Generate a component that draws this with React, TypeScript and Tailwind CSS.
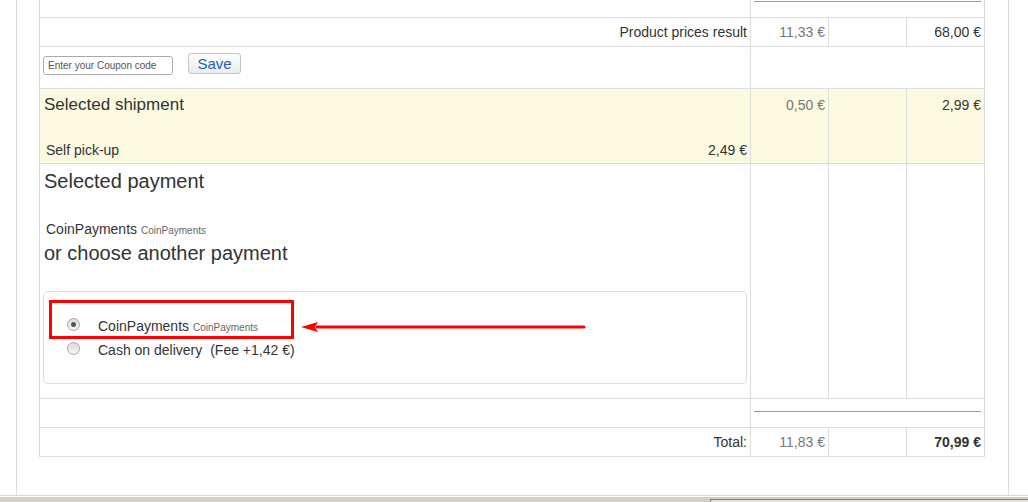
import React from "react";

const priceMuted = "text-right text-[#777] pr-[3px]";
const priceMain = "text-right text-[#333] pr-[3px]";

const Radio: React.FC<{ checked?: boolean }> = ({ checked }) => (
  <span className="relative inline-flex h-[13px] w-[13px] shrink-0 items-center justify-center rounded-full border border-[#a9a9a9] bg-gradient-to-b from-[#dcdcdc] to-[#f6f6f6]">
    {checked && <span className="h-[5px] w-[5px] rounded-full bg-[#555]" />}
  </span>
);

// thin rule used above the subtotal columns
const Rule = () => <div className="mx-[3px] border-t border-[#999]" />;

export default function App() {
  return (
    <div className="flex h-[502px] w-[1028px] flex-col overflow-hidden bg-white font-['Liberation_Sans',Arial,sans-serif] text-[14px] text-[#333]">
      <div className="ml-[16px] h-[495px] w-[993px] border-x border-[#ddd]">
        <table className="ml-[22px] w-[945px] table-fixed border-collapse">
          <colgroup>
            <col className="w-[711px]" />
            <col className="w-[78px]" />
            <col className="w-[78px]" />
            <col className="w-[78px]" />
          </colgroup>
          <tbody>
            <tr className="h-[17px]">
              <td className="border-x border-b border-[#ddd]" />
              <td colSpan={3} className="border-x border-b border-[#ddd] align-top pt-[1px]">
                <Rule />
              </td>
            </tr>

            <tr className="h-[29px]">
              <td className={`border border-[#ddd] pt-[2px] ${priceMain}`}>Product prices result</td>
              <td className={`border border-[#ddd] pt-[2px] ${priceMuted}`}>11,33 €</td>
              <td className="border border-[#ddd]" />
              <td className={`border border-[#ddd] pt-[2px] ${priceMain}`}>68,00 €</td>
            </tr>

            <tr className="h-[42px]">
              <td className="border border-[#ddd] align-top pl-[3px] pt-[6px]">
                <div className="flex items-start gap-[15px]">
                  <input
                    type="text"
                    placeholder="Enter your Coupon code"
                    className="mt-[3px] h-[19px] w-[130px] rounded-[3px] border border-[#aaa] px-[4px] text-[10px] text-[#333] outline-none placeholder:text-[#555]"
                  />
                  <button className="h-[21px] w-[53px] rounded-[3px] border border-[#c4c4c4] bg-gradient-to-b from-[#fdfdfd] to-[#ececec] text-[15px] leading-none text-[#1f5fb5]">
                    Save
                  </button>
                </div>
              </td>
              <td colSpan={3} className="border border-[#ddd]" />
            </tr>

            <tr className="h-[75px] bg-[#fdfae2]">
              <td className="h-[75px] border border-[#ddd] align-top pl-[4px] pr-[3px] pt-[6px] pb-[5px]">
                <div className="flex h-[63px] flex-col justify-between">
                  <div className="text-[17px] leading-[20px]">Selected shipment</div>
                  <div className="flex justify-between text-[14px] leading-[16px]">
                    <span className="pl-[2px]">Self pick-up</span>
                    <span>2,49 €</span>
                  </div>
                </div>
              </td>
              <td className={`border border-[#ddd] align-top pt-[6px] ${priceMuted}`}>0,50 €</td>
              <td className="border border-[#ddd]" />
              <td className={`border border-[#ddd] align-top pt-[6px] ${priceMain}`}>2,99 €</td>
            </tr>

            <tr className="h-[235px]">
              <td className="border border-[#ddd] align-top pl-[3px] pr-[3px] pt-[6px] pb-[12px]">
                <h2 className="pl-[1px] text-[20px] leading-[23px]">Selected payment</h2>
                <div className="mt-[28px] pl-[3px] leading-[16px]">
                  CoinPayments <span className="text-[10px] text-[#666]">CoinPayments</span>
                </div>
                <h3 className="mt-[3px] pl-[1px] text-[20px] leading-[23px]">or choose another payment</h3>

                <div className="relative mt-[26px] h-[93px] rounded-[5px] border border-[#ddd] pl-[23px] pt-[21px]">
                  <label className="flex h-[24px] items-center">
                    <Radio checked />
                    <span className="ml-[18px] mt-[4px]">
                      CoinPayments <span className="text-[10px] text-[#666]">CoinPayments</span>
                    </span>
                  </label>
                  <label className="flex h-[24px] items-center">
                    <Radio />
                    <span className="ml-[18px] mt-[4px]">
                      Cash on delivery <span className="ml-[4px]">(Fee +1,42 €)</span>
                    </span>
                  </label>

                  {/* highlight on the chosen method */}
                  <div className="pointer-events-none absolute left-[5px] top-[8px] h-[39px] w-[245px] border-[3px] border-[#f00]" />
                  <svg
                    className="pointer-events-none absolute left-[256px] top-[28px]"
                    width="286"
                    height="14"
                    viewBox="0 0 286 14"
                  >
                    <line x1="17" y1="7" x2="284" y2="7" stroke="#f00" strokeWidth="3" strokeLinecap="round" />
                    <path d="M1 7 L18 2 L15 7 L18 12 Z" fill="#f00" />
                  </svg>
                </div>
              </td>
              <td className="border border-[#ddd]" />
              <td className="border border-[#ddd]" />
              <td className="border border-[#ddd]" />
            </tr>

            <tr className="h-[29px]">
              <td className="border border-[#ddd]" />
              <td colSpan={3} className="border border-[#ddd] align-top pt-[12px]">
                <Rule />
              </td>
            </tr>

            <tr className="h-[29px]">
              <td className={`border border-[#ddd] pt-[2px] ${priceMain}`}>Total:</td>
              <td className={`border border-[#ddd] pt-[2px] ${priceMuted}`}>11,83 €</td>
              <td className="border border-[#ddd]" />
              <td className={`border border-[#ddd] pt-[2px] font-bold ${priceMain}`}>70,99 €</td>
            </tr>
          </tbody>
        </table>
      </div>

      {/* window scrollbar strip */}
      <div className="h-px bg-[#d8d6d0]" />
      <div className="h-px bg-white" />
      <div className="flex flex-1 bg-[#d4d0c8]">
        <div className="w-[710px]" />
        <div className="mt-[2px] flex-1 border-l border-t border-[#808080] bg-[#e4e1da]" />
      </div>
    </div>
  );
}
